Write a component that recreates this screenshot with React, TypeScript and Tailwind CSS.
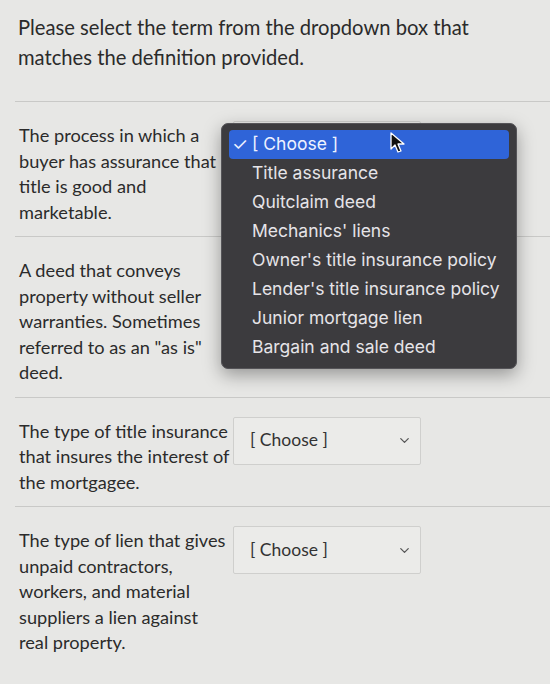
import { ChevronDown } from "lucide-react";

const options = [
  "Title assurance",
  "Quitclaim deed",
  "Mechanics' liens",
  "Owner's title insurance policy",
  "Lender's title insurance policy",
  "Junior mortgage lien",
  "Bargain and sale deed",
];

const questions = [
  "The process in which a buyer has assurance that title is good and marketable.",
  'A deed that conveys property without seller warranties. Sometimes referred to as an "as is" deed.',
  "The type of title insurance that insures the interest of the mortgagee.",
  "The type of lien that gives unpaid contractors, workers, and material suppliers a lien against real property.",
];

const SelectBox = () => (
  <div className="w-[188px] h-[48px] -mt-[2px] flex items-center justify-between pl-[16px] pr-[8px] border border-[#cfcfcd] bg-[#ebebe9] rounded-[2px]">
    <span className="text-[17.5px] text-[#333]">[ Choose ]</span>
    <ChevronDown className="w-[15px] h-[15px] text-[#555]" strokeWidth={2} />
  </div>
);

const Menu = () => (
  <div
    className="absolute left-[-12px] top-[0px] w-[296px] rounded-[7px] bg-[#3c3b3e] border border-[#555458] shadow-[0_6px_18px_rgba(0,0,0,0.35)] px-[7px] py-[6px] z-10"
    style={{ fontFamily: "Inter, 'Liberation Sans', sans-serif" }}
  >
    <div className="h-[29px] rounded-[4px] bg-[#2f64d8] flex items-center pl-[3px] text-[17.5px] text-[#eef2ff]">
      <span className="w-[20px] text-[18px] leading-none">✓</span>
      <span>[ Choose ]</span>
    </div>
    {options.map((o) => (
      <div key={o} className="h-[29px] flex items-center pl-[23px] text-[17.5px] text-[#e6e4e8]">
        {o}
      </div>
    ))}
  </div>
);

const Cursor = () => (
  <svg
    className="absolute left-[157px] top-[9px] z-20"
    width="16"
    height="22"
    viewBox="0 0 16 22"
  >
    <path
      d="M1 1 L1 17 L5 13 L8 20 L11 19 L8 12 L14 12 Z"
      fill="#111"
      stroke="#fff"
      strokeWidth="1.3"
      strokeLinejoin="round"
    />
  </svg>
);

export default function App() {
  return (
    <div
      className="min-h-screen w-[550px] bg-[#e7e7e5] text-[#2b2b2b] overflow-hidden"
      style={{ fontFamily: "Lato, 'Liberation Sans', sans-serif" }}
    >
      <div className="pt-[12px] pl-[18px] pr-[20px] pb-[29px]">
        <p className="text-[20.2px] leading-[30px]">
          Please select the term from the dropdown box that matches the definition provided.
        </p>
      </div>
      {questions.map((q, i) => (
        <div key={i} className="ml-[15px] border-t border-[#c9c9c7]">
          <div className="flex items-start pt-[21px] pb-[11px] pl-[4px]">
            <p className="w-[212px] text-[18.2px] leading-[25.5px]">{q}</p>
            <div className="relative ml-[2px]">
              <SelectBox />
              {i === 0 && (
                <>
                  <Menu />
                  <Cursor />
                </>
              )}
            </div>
          </div>
        </div>
      ))}
    </div>
  );
}
